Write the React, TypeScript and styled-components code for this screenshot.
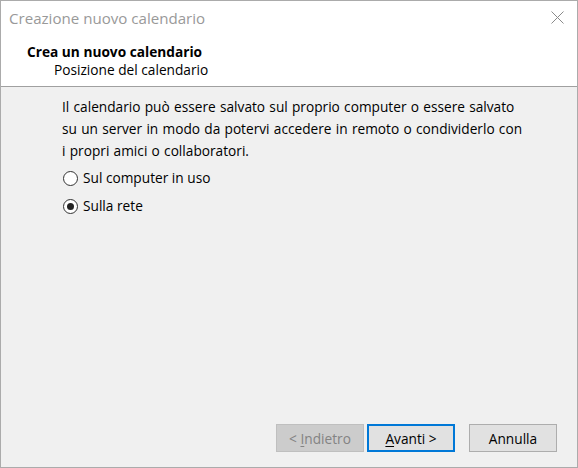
import React from 'react';
import styled, { createGlobalStyle } from 'styled-components';

const GlobalStyle = createGlobalStyle`
  html, body { margin: 0; padding: 0; background: #ffffff; }
  * { box-sizing: border-box; }
`;

const FONT = `"Open Sans", "Noto Sans", "Liberation Sans", sans-serif`;

const Window = styled.div`
  width: 578px;
  height: 468px;
  border: 1px solid #ababab;
  display: flex;
  flex-direction: column;
  background: #f0f0f0;
  font-family: ${FONT};
  font-size: 13.7px;
  line-height: 18px;
  color: #000;
`;

const TitleBar = styled.div`
  height: 34px;
  flex: none;
  background: #fff;
  display: flex;
  align-items: center;
  justify-content: space-between;
  padding: 0 12px 0 8px;
`;

const Title = styled.span`
  color: #999999;
  font-size: 15.1px;
`;

const CloseButton = styled.button`
  width: 16px;
  height: 16px;
  margin-top: -2px;
  padding: 0;
  border: none;
  background: transparent;
  display: flex;
  align-items: center;
  justify-content: center;
`;

const Header = styled.div`
  flex: none;
  background: #fff;
  height: 52px;
  padding: 8px 0 0 26px;
  border-bottom: 1px solid #a0a0a0;
`;

const HeaderTitle = styled.div`
  font-weight: 700;
`;

const HeaderSubtitle = styled.div`
  padding-left: 27px;
`;

const Body = styled.div`
  flex: 1;
  display: flex;
  flex-direction: column;
  padding: 9px 20px 15px 61px;
`;

const Description = styled.p`
  margin: 0;
  line-height: 22px;
  word-spacing: 0.7px;
`;

const RadioGroup = styled.div`
  margin-top: 2px;
  display: flex;
  flex-direction: column;
`;

const RadioRow = styled.label`
  height: 28px;
  display: flex;
  align-items: center;
  gap: 5px;
`;

const RadioCircle = styled.span<{ $checked: boolean }>`
  width: 15px;
  height: 15px;
  margin-left: 1px;
  border-radius: 50%;
  border: 1px solid #333;
  background: #fff;
  display: flex;
  align-items: center;
  justify-content: center;
  &::after {
    content: '';
    width: 7px;
    height: 7px;
    border-radius: 50%;
    background: #222;
    display: ${(p) => (p.$checked ? 'block' : 'none')};
  }
`;

const Footer = styled.div`
  margin-top: auto;
  display: flex;
  justify-content: flex-end;
`;

type Variant = 'disabled' | 'default' | 'normal';

const Button = styled.button<{ $variant: Variant; $gap: number }>`
  width: 88px;
  height: 28px;
  margin-left: ${(p) => p.$gap}px;
  font-family: ${FONT};
  font-size: 13.7px;
  padding: 0;
  background: ${(p) => (p.$variant === 'disabled' ? '#cccccc' : '#e1e1e1')};
  color: ${(p) => (p.$variant === 'disabled' ? '#838383' : '#000')};
  border: 1px solid
    ${(p) =>
      p.$variant === 'disabled' ? '#bfbfbf' : p.$variant === 'default' ? '#0078d7' : '#adadad'};
  box-shadow: ${(p) => (p.$variant === 'default' ? 'inset 0 0 0 1px #0078d7' : 'none')};
`;

const Key = styled.span`
  text-decoration: underline;
  text-underline-offset: 2px;
`;

export default function App() {
  return (
    <>
      <GlobalStyle />
      <Window>
        <TitleBar>
          <Title>Creazione nuovo calendario</Title>
          <CloseButton aria-label="Chiudi">
            <svg width="13" height="13" viewBox="0 0 13 13">
              <path d="M0.5 0.5 L12.5 12.5 M12.5 0.5 L0.5 12.5" stroke="#8a8a8a" strokeWidth="1" fill="none" />
            </svg>
          </CloseButton>
        </TitleBar>
        <Header>
          <HeaderTitle>Crea un nuovo calendario</HeaderTitle>
          <HeaderSubtitle>Posizione del calendario</HeaderSubtitle>
        </Header>
        <Body>
          <Description>
            Il calendario può essere salvato sul proprio computer o essere salvato
            <br />
            su un server in modo da potervi accedere in remoto o condividerlo con
            <br />
            i propri amici o collaboratori.
          </Description>
          <RadioGroup>
            <RadioRow>
              <RadioCircle $checked={false} />
              Sul computer in uso
            </RadioRow>
            <RadioRow>
              <RadioCircle $checked={true} />
              Sulla rete
            </RadioRow>
          </RadioGroup>
          <Footer>
            <Button $variant="disabled" $gap={0} disabled>
              &lt; <Key>I</Key>ndietro
            </Button>
            <Button $variant="default" $gap={3}>
              <Key>A</Key>vanti &gt;
            </Button>
            <Button $variant="normal" $gap={14}>
              Annulla
            </Button>
          </Footer>
        </Body>
      </Window>
    </>
  );
}
